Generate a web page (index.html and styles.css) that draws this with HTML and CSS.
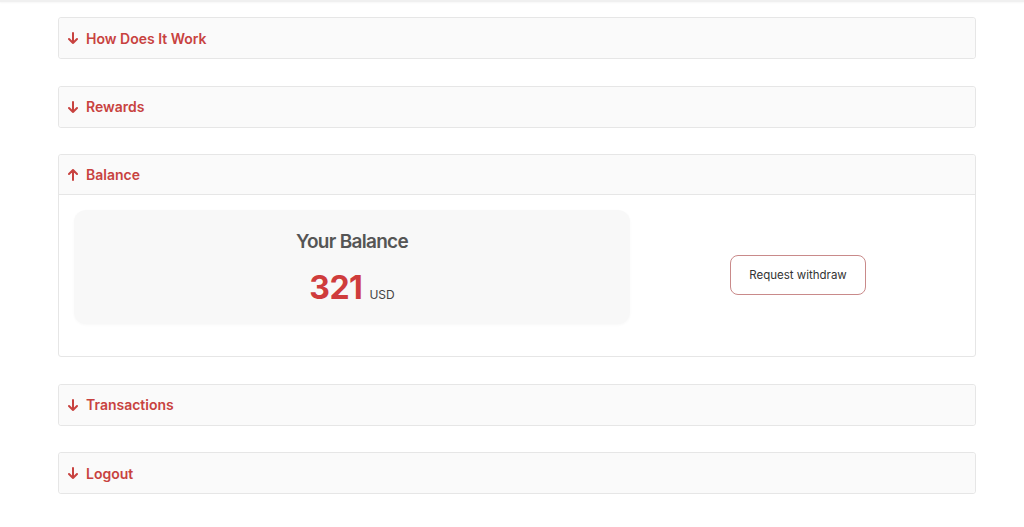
FILE: index.html
```html
<!DOCTYPE html>
<html lang="en">
<head>
<meta charset="utf-8">
<title>Account</title>
<link rel="stylesheet" href="styles.css">
</head>
<body>
<div class="topbar"></div>
<main class="wrap">
  <section class="panel">
    <div class="panel-head">
      <svg class="arrow" viewBox="0 0 10 12" width="10" height="12"><path d="M5 1v10M1 7l4 4 4-4" fill="none" stroke="currentColor" stroke-width="2" stroke-linecap="round" stroke-linejoin="round"/></svg>
      <span>How Does It Work</span>
    </div>
  </section>
  <section class="panel">
    <div class="panel-head">
      <svg class="arrow" viewBox="0 0 10 12" width="10" height="12"><path d="M5 1v10M1 7l4 4 4-4" fill="none" stroke="currentColor" stroke-width="2" stroke-linecap="round" stroke-linejoin="round"/></svg>
      <span>Rewards</span>
    </div>
  </section>
  <section class="panel open">
    <div class="panel-head">
      <svg class="arrow" viewBox="0 0 10 12" width="10" height="12"><path d="M5 11V1M1 5l4-4 4 4" fill="none" stroke="currentColor" stroke-width="2" stroke-linecap="round" stroke-linejoin="round"/></svg>
      <span>Balance</span>
    </div>
    <div class="panel-body">
      <div class="balance-col">
        <div class="balance-card">
          <h2 class="balance-title">Your Balance</h2>
          <div class="balance-amount"><span class="amount">321</span><span class="currency">USD</span></div>
        </div>
      </div>
      <div class="actions">
        <button class="withdraw">Request withdraw</button>
      </div>
    </div>
  </section>
  <section class="panel">
    <div class="panel-head">
      <svg class="arrow" viewBox="0 0 10 12" width="10" height="12"><path d="M5 1v10M1 7l4 4 4-4" fill="none" stroke="currentColor" stroke-width="2" stroke-linecap="round" stroke-linejoin="round"/></svg>
      <span>Transactions</span>
    </div>
  </section>
  <section class="panel">
    <div class="panel-head">
      <svg class="arrow" viewBox="0 0 10 12" width="10" height="12"><path d="M5 1v10M1 7l4 4 4-4" fill="none" stroke="currentColor" stroke-width="2" stroke-linecap="round" stroke-linejoin="round"/></svg>
      <span>Logout</span>
    </div>
  </section>
</main>
</body>
</html>
```
FILE: styles.css
```css
* { box-sizing: border-box; }
html, body { margin: 0; padding: 0; background: #ffffff; }
body { font-family: Inter, "Noto Sans", "Liberation Sans", sans-serif; }

.topbar {
  height: 2px;
  background: #f0f0f0;
  box-shadow: 0 1px 2px rgba(0,0,0,0.04);
}

.wrap {
  padding: 15px 48px 0 58px;
  display: flex;
  flex-direction: column;
  gap: 26.5px;
}

.panel {
  border: 1px solid #e6e6e6;
  border-radius: 3px;
  background: #ffffff;
}

.panel-head {
  height: 40px;
  background: #fafafa;
  display: flex;
  align-items: center;
  gap: 8px;
  padding: 0 9px;
  color: #c8423f;
  font-weight: 600;
  font-size: 14px;
  border-radius: 3px;
}
.open .panel-head {
  border-bottom: 1px solid #e6e6e6;
  border-radius: 3px 3px 0 0;
}
.arrow { flex: none; }

.panel-body {
  display: grid;
  grid-template-columns: 556px 1fr;
  padding: 15px 15px 16px 15px;
}
.balance-col {
  padding-bottom: 16px;
}

.balance-card {
  background: #f8f8f8;
  border-radius: 12px;
  box-shadow: 0 1px 3px rgba(0,0,0,0.03);
  padding: 20px 0 16px;
  text-align: center;
  height: 114px;
}
.balance-title {
  margin: 0;
  font-size: 19px;
  line-height: 24px;
  font-weight: 600;
  letter-spacing: -0.7px;
  color: #555555;
}
.balance-amount {
  margin-top: 14px;
  line-height: 40px;
  display: flex;
  justify-content: center;
  align-items: baseline;
  gap: 7px;
}
.amount {
  font-size: 32px;
  font-weight: 700;
  color: #cf3c3c;
  letter-spacing: -0.5px;
}
.currency {
  font-size: 12px;
  color: #444444;
}

.actions {
  display: flex;
  align-items: center;
  justify-content: center;
}
.withdraw {
  width: 136px;
  height: 40px;
  background: #ffffff;
  border: 1px solid #c98a8a;
  border-radius: 8px;
  font-family: Inter, "Noto Sans", sans-serif;
  font-size: 11.5px;
  color: #333333;
  cursor: pointer;
  margin-left: 6px;
}
```
